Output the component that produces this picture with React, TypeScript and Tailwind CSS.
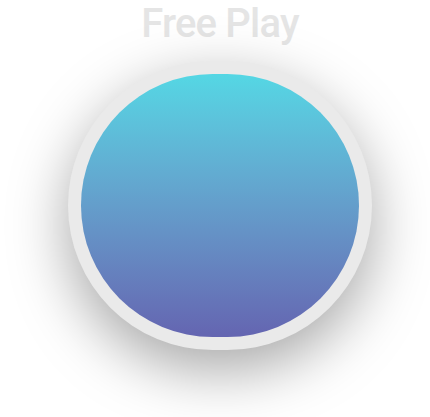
export default function App() {
  return (
    <div className="flex min-h-[417px] w-full flex-col items-center bg-white pl-[10px] font-['Roboto',sans-serif]">
      <h1 className="text-[40px] font-medium leading-[47px] tracking-[-0.8px] text-[#e5e5e5]">
        Free Play
      </h1>
      <button
        type="button"
        aria-label="Free Play"
        className="mt-[14px] h-[289px] w-[304px] rounded-full bg-[#eaeaea] p-[13px] shadow-[0_20px_60px_rgba(0,0,0,0.35)]"
      >
        <span className="block h-full w-full rounded-full bg-gradient-to-b from-[#54d7e4] to-[#6465b1]" />
      </button>
    </div>
  );
}
